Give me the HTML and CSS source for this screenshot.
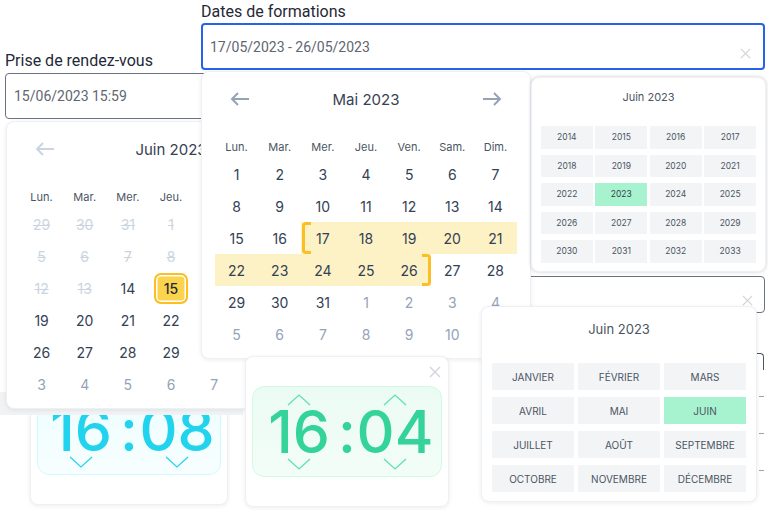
FILE: index.html
```html
<!DOCTYPE html>
<html lang="fr">
<head>
<meta charset="utf-8">
<title>Sélecteurs de dates</title>
<link rel="stylesheet" href="styles.css">
</head>
<body>
<div class="canvas">

  <div class="win bg-input">
    <svg class="x-icon" viewBox="0 0 12 12"><path d="M1 1L11 11M11 1L1 11"/></svg>
  </div>
  <div class="win bg-box"></div>
  <div class="win bg-ticks"><span></span><span></span><span></span></div>

  <div class="win card time-card time-cyan">
    <svg class="x-icon close" viewBox="0 0 12 12"><path d="M1 1L11 11M11 1L1 11"/></svg>
    <div class="time-display">
      <div class="unit">
        <svg class="chev" viewBox="0 0 24 12"><polyline points="1,11 12,1 23,11"/></svg>
        <span class="num">16</span>
        <svg class="chev" viewBox="0 0 24 12"><polyline points="1,1 12,11 23,1"/></svg>
      </div>
      <span class="colon">:</span>
      <div class="unit">
        <svg class="chev" viewBox="0 0 24 12"><polyline points="1,11 12,1 23,11"/></svg>
        <span class="num">08</span>
        <svg class="chev" viewBox="0 0 24 12"><polyline points="1,1 12,11 23,1"/></svg>
      </div>
    </div>
  </div>

  <div class="win shade"></div>

  <div class="win field field-rdv">
    <label class="field-label">Prise de rendez-vous</label>
    <div class="input input-plain">15/06/2023 15:59</div>
  </div>

  <div class="win card cal cal-juin">
    <div class="cal-head">
      <svg class="arrow arrow-off" viewBox="0 0 20 16"><path d="M19 8H2M8 2L2 8L8 14"/></svg>
      <span class="cal-title">Juin 2023</span>
      <svg class="arrow" viewBox="0 0 20 16"><path d="M1 8H18M12 2L18 8L12 14"/></svg>
    </div>
    <div class="cal-dows">
      <span>Lun.</span><span>Mar.</span><span>Mer.</span><span>Jeu.</span><span>Ven.</span><span>Sam.</span><span>Dim.</span>
    </div>
    <div class="cal-days">
      <span class="d off">29</span><span class="d off">30</span><span class="d off">31</span><span class="d off">1</span><span class="d off">2</span><span class="d off">3</span><span class="d off">4</span>
      <span class="d off">5</span><span class="d off">6</span><span class="d off">7</span><span class="d off">8</span><span class="d off">9</span><span class="d off">10</span><span class="d off">11</span>
      <span class="d off">12</span><span class="d off">13</span><span class="d">14</span><span class="d"><b class="pick">15</b></span><span class="d">16</span><span class="d">17</span><span class="d">18</span>
      <span class="d">19</span><span class="d">20</span><span class="d">21</span><span class="d">22</span><span class="d">23</span><span class="d">24</span><span class="d">25</span>
      <span class="d">26</span><span class="d">27</span><span class="d">28</span><span class="d">29</span><span class="d">30</span><span class="d other">1</span><span class="d other">2</span>
      <span class="d other">3</span><span class="d other">4</span><span class="d other">5</span><span class="d other">6</span><span class="d other">7</span><span class="d other">8</span><span class="d other">9</span>
    </div>
  </div>

  <div class="win field field-form">
    <label class="field-label">Dates de formations</label>
    <div class="input input-focus">17/05/2023 - 26/05/2023
      <svg class="x-icon clear" viewBox="0 0 12 12"><path d="M1 1L11 11M11 1L1 11"/></svg>
    </div>
  </div>

  <div class="win card cal cal-mai">
    <div class="cal-head">
      <svg class="arrow" viewBox="0 0 20 16"><path d="M19 8H2M8 2L2 8L8 14"/></svg>
      <span class="cal-title">Mai 2023</span>
      <svg class="arrow" viewBox="0 0 20 16"><path d="M1 8H18M12 2L18 8L12 14"/></svg>
    </div>
    <div class="cal-dows">
      <span>Lun.</span><span>Mar.</span><span>Mer.</span><span>Jeu.</span><span>Ven.</span><span>Sam.</span><span>Dim.</span>
    </div>
    <div class="cal-days">
      <span class="d">1</span><span class="d">2</span><span class="d">3</span><span class="d">4</span><span class="d">5</span><span class="d">6</span><span class="d">7</span>
      <span class="d">8</span><span class="d">9</span><span class="d">10</span><span class="d">11</span><span class="d">12</span><span class="d">13</span><span class="d">14</span>
      <span class="d">15</span><span class="d">16</span><span class="d range range-start">17</span><span class="d range">18</span><span class="d range">19</span><span class="d range">20</span><span class="d range">21</span>
      <span class="d range">22</span><span class="d range">23</span><span class="d range">24</span><span class="d range">25</span><span class="d range range-end">26</span><span class="d">27</span><span class="d">28</span>
      <span class="d">29</span><span class="d">30</span><span class="d">31</span><span class="d other">1</span><span class="d other">2</span><span class="d other">3</span><span class="d other">4</span>
      <span class="d other">5</span><span class="d other">6</span><span class="d other">7</span><span class="d other">8</span><span class="d other">9</span><span class="d other">10</span><span class="d other">11</span>
    </div>
  </div>

  <div class="win card years">
    <div class="pick-title">Juin 2023</div>
    <div class="ygrid">
      <span>2014</span><span>2015</span><span>2016</span><span>2017</span>
      <span>2018</span><span>2019</span><span>2020</span><span>2021</span>
      <span>2022</span><span class="on">2023</span><span>2024</span><span>2025</span>
      <span>2026</span><span>2027</span><span>2028</span><span>2029</span>
      <span>2030</span><span>2031</span><span>2032</span><span>2033</span>
    </div>
  </div>

  <div class="win card time-card time-green">
    <svg class="x-icon close" viewBox="0 0 12 12"><path d="M1 1L11 11M11 1L1 11"/></svg>
    <div class="time-display">
      <div class="unit">
        <svg class="chev" viewBox="0 0 24 12"><polyline points="1,11 12,1 23,11"/></svg>
        <span class="num">16</span>
        <svg class="chev" viewBox="0 0 24 12"><polyline points="1,1 12,11 23,1"/></svg>
      </div>
      <span class="colon">:</span>
      <div class="unit">
        <svg class="chev" viewBox="0 0 24 12"><polyline points="1,11 12,1 23,11"/></svg>
        <span class="num">04</span>
        <svg class="chev" viewBox="0 0 24 12"><polyline points="1,1 12,11 23,1"/></svg>
      </div>
    </div>
  </div>

  <div class="win card months">
    <div class="pick-title">Juin 2023</div>
    <div class="mgrid">
      <span>Janvier</span><span>Février</span><span>Mars</span>
      <span>Avril</span><span>Mai</span><span class="on">Juin</span>
      <span>Juillet</span><span>Août</span><span>Septembre</span>
      <span>Octobre</span><span>Novembre</span><span>Décembre</span>
    </div>
  </div>

</div>
</body>
</html>
```

FILE: styles.css
```css
* { box-sizing: border-box; margin: 0; padding: 0; }

html, body {
  width: 768px;
  height: 511px;
  overflow: hidden;
  background: #ffffff;
}

body {
  font-family: Inter, "Noto Sans", sans-serif;
  color: #334155;
}

.canvas {
  position: relative;
  width: 768px;
  height: 511px;
  overflow: hidden;
}

.win { position: absolute; }

.card {
  background: #ffffff;
  border: 1px solid #eef0f3;
  border-radius: 8px;
  box-shadow: 0 1px 4px rgba(15, 23, 42, 0.08);
}

/* ---------- icons ---------- */
.x-icon {
  width: 11px;
  height: 11px;
  fill: none;
  stroke: #d1d5db;
  stroke-width: 1.4;
}

.arrow {
  width: 20px;
  height: 16px;
  fill: none;
  stroke: #94a3b8;
  stroke-width: 2;
}
.arrow-off { stroke: #cbd5e1; }

/* ---------- background elements ---------- */
.bg-input {
  left: 527px;
  top: 276px;
  width: 238px;
  height: 37px;
  border: 1px solid #6b7280;
  border-radius: 4px;
  display: flex;
  justify-content: flex-end;
  padding: 18px 11px 0 0;
}

.bg-box {
  left: 600px;
  top: 353px;
  width: 164px;
  height: 17px;
  border: 1px solid #4b5563;
  border-bottom: none;
  border-radius: 4px 4px 0 0;
}

.bg-ticks {
  left: 759px;
  top: 396px;
  display: flex;
  flex-direction: column;
  gap: 36px;
}
.bg-ticks span {
  display: block;
  width: 5px;
  height: 1px;
  background: #9ca3af;
}

.shade {
  left: 0;
  top: 392px;
  width: 243px;
  height: 23px;
  background: #f1f2f4;
}

/* ---------- fields ---------- */
.field-label {
  display: block;
  font-family: Roboto, "Liberation Sans", sans-serif;
  font-size: 16px;
  line-height: 18px;
  color: #1f2937;
}

.input {
  position: relative;
  display: flex;
  align-items: center;
  font-family: Roboto, "Liberation Sans", sans-serif;
  font-size: 14px;
  color: #5f6672;
  background: #ffffff;
  border-radius: 4px;
}

.field-rdv { left: 5px; top: 52px; width: 330px; }
.field-rdv .field-label { margin-bottom: 3px; }
.input-plain {
  height: 46px;
  border: 1px solid #6b7280;
  padding-left: 8px;
}

.field-form { left: 201px; top: 3px; width: 564px; }
.field-form .field-label { margin-bottom: 2px; }
.input-focus {
  height: 47px;
  border: 2px solid #2563eb;
  padding-left: 7px;
}
.clear {
  position: absolute;
  right: 12px;
  bottom: 9px;
}

/* ---------- calendars ---------- */
.cal { padding: 0 13px; }
.cal-juin { left: 6px; top: 121px; width: 330px; height: 288px; }
.cal-mai { left: 201px; top: 71px; width: 330px; height: 288px; }

.cal-head {
  height: 54px;
  padding: 0 15px;
  display: flex;
  align-items: center;
  justify-content: space-between;
}
.cal-title {
  font-size: 15px;
  color: #374151;
}

.cal-dows {
  margin-top: 11px;
  margin-bottom: 1px;
  height: 20px;
  display: grid;
  grid-template-columns: repeat(7, 1fr);
  align-items: center;
  justify-items: center;
  font-size: 11px;
  color: #4b5563;
}

.cal-days {
  display: grid;
  grid-template-columns: repeat(7, 1fr);
  grid-auto-rows: 32px;
}

.d {
  position: relative;
  display: flex;
  align-items: center;
  justify-content: center;
  font-size: 14px;
  color: #334155;
}
.d.off { color: #cbd5e1; text-decoration: line-through; }
.d.other { color: #94a3b8; }

.d.range { background: #fdf2c5; }
.range-start::before,
.range-end::after {
  content: "";
  position: absolute;
  top: 0;
  bottom: 0;
  width: 6px;
  border: 3px solid #fbbf24;
}
.range-start::before {
  left: 1px;
  border-right: none;
  border-radius: 4px 0 0 4px;
}
.range-end::after {
  right: 0;
  border-left: none;
  border-radius: 0 4px 4px 0;
}

.pick {
  width: 34px;
  height: 31px;
  display: flex;
  align-items: center;
  justify-content: center;
  font-weight: 500;
  color: #1f2937;
  background: #fcd34d;
  border: 2px solid #fbbf24;
  border-radius: 7px;
  box-shadow: inset 0 0 0 1.5px #ffffff;
}

/* ---------- year / month pickers ---------- */
.pick-title {
  text-align: center;
  color: #4b5563;
}

.years {
  left: 531px;
  top: 77px;
  width: 235px;
  height: 195px;
  padding: 0 9px;
  box-shadow: 0 0 3px 1px rgba(15, 23, 42, 0.12);
}
.years .pick-title {
  font-size: 11px;
  line-height: 14px;
  margin-top: 12px;
  margin-bottom: 22px;
}
.ygrid {
  display: grid;
  grid-template-columns: repeat(4, 1fr);
  grid-auto-rows: 22.5px;
  column-gap: 2.7px;
  row-gap: 6px;
}
.ygrid span {
  display: flex;
  align-items: center;
  justify-content: center;
  background: #f3f4f6;
  font-size: 8.5px;
  color: #4b5563;
}
.ygrid .on { background: #a7f3d0; color: #374151; }

.months {
  left: 481px;
  top: 306px;
  width: 276px;
  height: 196px;
  padding: 0 10px;
}
.months .pick-title {
  font-size: 13px;
  line-height: 16px;
  margin-top: 14px;
  margin-bottom: 26px;
}
.mgrid {
  display: grid;
  grid-template-columns: repeat(3, 1fr);
  grid-auto-rows: 27px;
  column-gap: 4px;
  row-gap: 7px;
}
.mgrid span {
  display: flex;
  align-items: center;
  justify-content: center;
  background: #f3f4f6;
  font-size: 10px;
  text-transform: uppercase;
  color: #4b5563;
}
.mgrid .on { background: #a7f3d0; }

/* ---------- time pickers ---------- */
.time-card { padding: 29px 6px 0 6px; }
.time-cyan { left: 30px; top: 354px; width: 198px; height: 151px; }
.time-green { left: 245px; top: 356px; width: 204px; height: 151px; }

.close {
  position: absolute;
  right: 7px;
  top: 9px;
  width: 12px;
  height: 12px;
}

.time-display {
  height: 91px;
  border-radius: 12px;
  display: flex;
  justify-content: center;
  padding-top: 7px;
}
.unit {
  width: 76px;
  display: flex;
  flex-direction: column;
  align-items: center;
}
.num, .colon {
  font-size: 59px;
  line-height: 59px;
  font-weight: 500;
}
.num { margin: -4px 0 -3px; }
.colon {
  width: 20px;
  text-align: center;
  margin-top: 8px;
}
.chev {
  width: 24px;
  height: 12px;
  fill: none;
  stroke-width: 1.2;
}

.time-cyan .time-display {
  background: linear-gradient(#ecfeff, #f7feff);
  border: 1px solid #cffafe;
}
.time-cyan .num, .time-cyan .colon { color: #22d3ee; }
.time-cyan .chev { stroke: #22d3ee; }

.time-green .time-display {
  background: linear-gradient(#ebfbf3, #f3fdf8);
  border: 1px solid #d1fae5;
}
.time-green .num, .time-green .colon { color: #34d399; }
.time-green .chev { stroke: #5fdfae; }
```
